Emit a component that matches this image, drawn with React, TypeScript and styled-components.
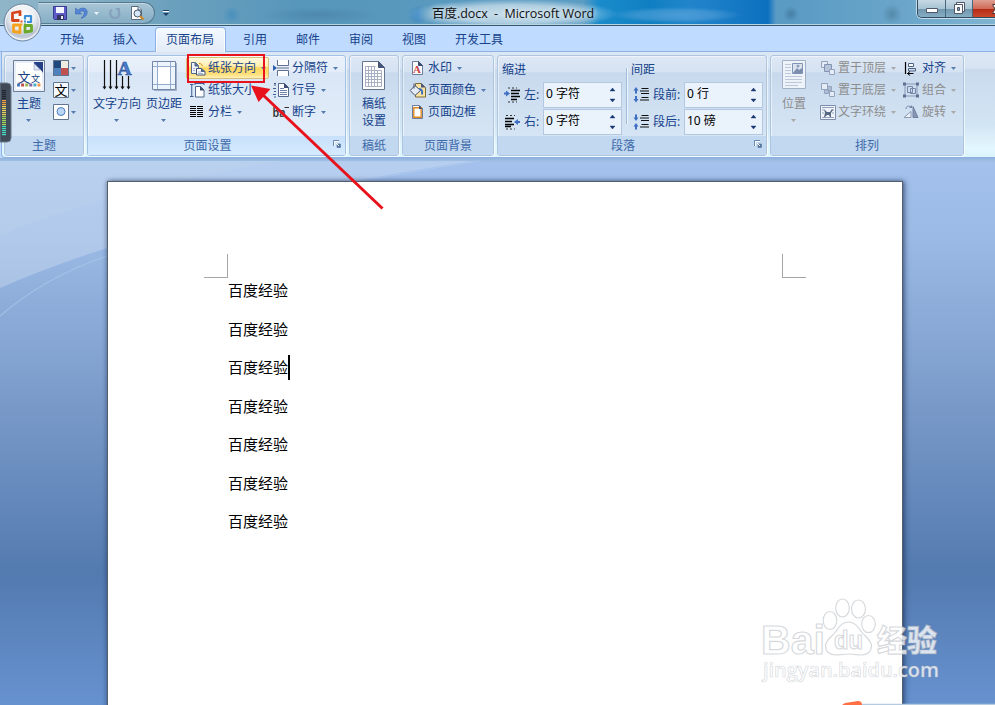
import React from 'react';
import styled, { createGlobalStyle, css } from 'styled-components';

const Global = createGlobalStyle`
  * { box-sizing: border-box; }
  html, body { margin: 0; padding: 0; overflow: hidden; }
  body {
    font-family: "Noto Sans", "Noto Sans CJK SC", sans-serif;
    font-size: 12px;
    color: #15428b;
  }
  svg { overflow: visible; }
`;

const Window = styled.div`
  position: relative;
  width: 995px;
  height: 705px;
  overflow: hidden;
  display: flex;
  flex-direction: column;
  background: #bfdbff;
`;

/* ---------- title bar ---------- */

const TitleBar = styled.header`
  position: relative;
  flex: none;
  display: flex;
  height: 26px;
  border-bottom: 1px solid #37586c;
  box-shadow: inset 0 -1px 0 #b7d6e4;
  overflow: hidden;
  background:
    radial-gradient(ellipse 105px 15px at 513px 14px, rgba(255, 255, 255, 0.68), rgba(255, 255, 255, 0.5) 60%, rgba(255, 255, 255, 0) 100%),
    radial-gradient(ellipse 66px 8px at 676px 15px, rgba(120, 180, 225, 0.5), rgba(120, 180, 225, 0.35) 60%, transparent),
    linear-gradient(90deg, transparent 583px, #1a8ccb 598px, #0f7fc2 650px, #2285cb 690px, #0c70bf 768px, transparent 776px),
    radial-gradient(circle at 232px 15px, rgba(62, 139, 190, 0.7), transparent 9px),
    radial-gradient(circle at 418px 15px, rgba(50, 132, 196, 0.9), transparent 10px),
    radial-gradient(circle at 791px 14px, rgba(50, 100, 135, 0.5), transparent 8px),
    radial-gradient(circle at 892px 14px, rgba(60, 110, 140, 0.5), transparent 10px),
    radial-gradient(ellipse 60px 8px at 320px 15px, rgba(60, 110, 145, 0.35), transparent),
    linear-gradient(90deg, #8fb5c8 0, #84aec3 90px, #6ba0bd 170px, #5796bb 300px, #5b9cc2 560px, #5a9bc4 790px, #6aa5c9 900px, #80b4d2 995px);
`;

const QuickAccess = styled.div`
  display: flex;
  flex: none;
  align-items: center;
  margin: 2px 0 0 38px;
  width: 117px;
  height: 22px;
  padding-left: 14px;
  border: 1px solid #557a92;
  border-left-color: transparent;
  border-radius: 0 11px 11px 0;
  background: linear-gradient(#a8c5d5, #85aec5);
  box-shadow: inset 0 1px 0 rgba(255, 255, 255, 0.35);
`;

const QuickIcon = styled.span<{ $left?: number }>`
  display: flex;
  margin-left: ${p => p.$left ?? 0}px;
`;

const QuickMenu = styled.span`
  display: flex;
  margin: 10px 0 0 8px;
`;

const Title = styled.h1`
  margin: 1px 0 0 263px;
  font: 400 12.500px/26px "Open Sans", "Noto Sans CJK SC", sans-serif;
  color: #101010;
  white-space: pre;
  letter-spacing: -0.04px;
  text-shadow: 0 0 6px #fff;
`;

const WindowButtons = styled.div`
  display: flex;
  margin-left: auto;
  width: 78px;
  height: 18px;
  border: 1px solid #2f4c62;
  border-width: 0 0 1px 1px;
  border-radius: 0 0 0 5px;
  box-shadow: 0 0 0 1px rgba(255, 255, 255, 0.6);
  overflow: hidden;
`;

const WindowButton = styled.span<{ $w: number; $close?: boolean }>`
  display: flex;
  flex: none;
  justify-content: center;
  align-items: center;
  width: ${p => p.$w}px;
  border-right: 1px solid #46677d;
  background: ${p => p.$close
    ? 'linear-gradient(#dfa093, #cf6a58 50%, #b42a13 52%, #c8492c)'
    : 'linear-gradient(#c6d9e4, #a9c4d3 50%, #6f96ac 52%, #86adc2)'};
`;

const Orb = styled.div`
  position: absolute;
  left: 2px;
  top: 2px;
  width: 40px;
  height: 40px;
`;

/* ---------- tabs ---------- */

const Tabs = styled.nav`
  flex: none;
  display: flex;
  height: 26px;
  padding: 1px 0 0 45.500px;
  background: #bfdbff;
  border-bottom: 1px solid #8db2e3;
`;

const Tab = styled.span<{ $active?: boolean }>`
  height: 25px;
  padding: 0 14.500px;
  line-height: 26px;
  white-space: nowrap;
  ${p => p.$active && css`
    margin: 0 3px;
    padding: 0 10.500px;
    height: 26px;
    line-height: 24px;
    border: 1px solid #8db2e3;
    border-bottom: 0;
    border-radius: 4px 4px 0 0;
    background: linear-gradient(#f4f9ff, #e1eaf6);
    box-shadow: inset 0 0 0 1px #f8fcff;
  `}
`;

/* ---------- ribbon ---------- */

const Ribbon = styled.section`
  flex: none;
  display: flex;
  gap: 3px;
  height: 106px;
  margin-left: 1px;
  padding: 3px 0 0 2px;
  border: 1px solid #8db2e3;
  border-width: 0 0 1px 1px;
  border-radius: 0 0 0 4px;
  background: linear-gradient(#dce7f5 0, #d8e4f3 15%, #c9daed 17%, #d2e5f4 70%, #e3f7fe 92%, #dbf3fd 100%);
`;

const GroupBox = styled.div<{ $w: number; $hover?: boolean }>`
  display: flex;
  flex: none;
  flex-direction: column;
  width: ${p => p.$w}px;
  height: 101px;
  border: 1px solid ${p => (p.$hover ? '#a4c2e4' : '#adc5df')};
  border-radius: 3px;
  box-shadow: inset 1px 1px 0 rgba(255, 255, 255, 0.5), 1px 1px 0 rgba(255, 255, 255, 0.6);
  background: ${p => p.$hover
    ? 'linear-gradient(#eaf1fa 0, #e3ecf8 16%, #d9e6f5 17%, #deeaf8 50%, #e3effc 100%)'
    : 'linear-gradient(#dee8f5 0, #d5e2f2 16%, #c8d9ed 17%, #cddef0 40%, #d9e8f6 100%)'};
`;

const GroupBody = styled.div`
  display: flex;
  height: 80px;
  padding-top: 1px;
`;

const GroupFooter = styled.div<{ $hover?: boolean }>`
  display: flex;
  align-items: center;
  height: 19px;
  padding: 0 4px;
  line-height: 19px;
  color: #3e6aaa;
  background: ${p => (p.$hover ? 'linear-gradient(#c8e0fb, #d5ebff)' : '#c1d8f0')};
`;

const GroupName = styled.span<{ $inset: number }>`
  flex: 1;
  padding-right: ${p => p.$inset}px;
  text-align: center;
`;

const Launcher = styled.span`
  display: flex;
  margin-top: -4px;
`;

const BigButton = styled.div<{ $w: number; $left?: number; $off?: boolean }>`
  display: flex;
  flex-direction: column;
  align-items: center;
  flex: none;
  width: ${p => p.$w}px;
  margin-left: ${p => p.$left ?? 0}px;
  padding-top: 3px;
  color: ${p => (p.$off ? '#8d8d8d' : '#15428b')};
`;

const BigIcon = styled.span`
  display: flex;
  align-items: flex-start;
  height: 35px;
`;

const BigLabel = styled.span`
  line-height: 17px;
  white-space: nowrap;
`;

const BigCaret = styled.span`
  display: flex;
  margin: 7px 1px 0 0;
`;

const Column = styled.div<{ $left: number; $w?: number }>`
  flex: none;
  margin-left: ${p => p.$left}px;
  width: ${p => (p.$w ? `${p.$w}px` : 'auto')};
`;

const SmallButton = styled.div<{ $gap?: number; $off?: boolean; $active?: boolean }>`
  display: flex;
  align-items: center;
  height: 22px;
  padding-left: 3px;
  border: 1px solid transparent;
  white-space: nowrap;
  line-height: 20px;
  color: ${p => (p.$off ? '#8d8d8d' : '#15428b')};
  & > svg:first-child { margin-right: ${p => p.$gap ?? 2}px; flex: none; }
  ${p => p.$active && css`
    border-color: #d8bf78;
    border-radius: 2px;
    background: linear-gradient(#fffbe0 0, #ffeeb0 40%, #ffd75c 50%, #ffdf78 80%, #fff0b5 100%);
  `}
`;

const CaretWrap = styled.span<{ $left?: number }>`
  display: flex;
  margin-left: ${p => p.$left ?? 5}px;
`;

const ParaColumn = styled.div<{ $left: number; $w: number }>`
  display: flex;
  flex-direction: column;
  flex: none;
  width: ${p => p.$w}px;
  margin-left: ${p => p.$left}px;
`;

const ParaHeading = styled.div`
  height: 24px;
  line-height: 25px;
`;

const ParaRow = styled.div`
  display: flex;
  align-items: center;
  height: 27px;
  padding-left: 2px;
  line-height: 25px;
`;

const ParaLabel = styled.span<{ $w: number }>`
  width: ${p => p.$w}px;
  margin-left: 3px;
  white-space: nowrap;
`;

const Spin = styled.div`
  display: flex;
  justify-content: space-between;
  align-items: center;
  width: 79px;
  height: 26px;
  padding: 0 6px 0 2px;
  border: 1px solid #b3c7e1;
  background: #eaf2fb;
  color: #000;
`;

const SpinValue = styled.span`
  height: 24px;
  line-height: 22px;
`;

const Divider = styled.div`
  width: 2px;
  height: 56px;
  margin: 11px 0 0 4px;
  background: linear-gradient(90deg, #9fbbdc 50%, #eef5fc 50%);
`;

/* ---------- document ---------- */

const Workspace = styled.main`
  position: relative;
  flex: 1;
  padding: 23px 0 0 107px;
  background: linear-gradient(#8fb1da 0, #9dbce2 2px, #a3c1ec 5px, #9bbae5 80px, #7f9fcd 220px, #547bb0 412px, #557cb2 425px, #6692cf 547px);
`;

const Backdrop = styled.svg`
  position: absolute;
  left: 0;
  top: 0;
`;

const Page = styled.article`
  position: relative;
  width: 796px;
  height: 540px;
  padding: 72px 96px 0;
  border: 1px solid #555f6b;
  background: #fff;
  box-shadow: 2px 0 5px rgba(20, 40, 80, 0.55), -1px 0 4px rgba(20, 40, 80, 0.3);
`;

const Corners = styled.div`
  display: flex;
  justify-content: space-between;
  height: 24px;
`;

const Corner = styled.span<{ $side: 'left' | 'right' }>`
  width: 24px;
  height: 24px;
  border-bottom: 1px solid #a5a5a5;
  ${p => (p.$side === 'left' ? 'border-right: 1px solid #a5a5a5;' : 'border-left: 1px solid #a5a5a5;')}
`;

const Paragraph = styled.p`
  display: flex;
  align-items: center;
  margin: 0 0 0 24px;
  height: 38.500px;
  color: #000;
  font-size: 15px;
  line-height: 26px;
`;

const Lines = styled.div`
  margin-top: -7px;
`;

const TextCursor = styled.i`
  width: 2px;
  height: 25px;
  background: #000;
`;

/* ---------- overlays ---------- */

const Meter = styled.svg`
  position: absolute;
  left: 0;
  top: 83px;
`;

const RedFrame = styled.div`
  position: absolute;
  left: 187px;
  top: 54px;
  width: 78px;
  height: 29px;
  border: 2px solid #e8121c;
`;

const Overlay = styled.svg`
  position: absolute;
  left: 0;
  top: 0;
  pointer-events: none;
`;

/* ---------- icons ---------- */

const Caret = ({ off }: { off?: boolean }) => (
  <svg width="5" height="3" viewBox="0 0 5 3"><path d="M0 0h5L2.5 3z" fill={off ? '#a9a9a9' : '#567db1'} /></svg>
);

const SpinArrows = () => (
  <svg width="5" height="15" viewBox="0 0 5 15"><path d="M0 4h5L2.5 1zM0 12h5L2.5 15z" fill="#15366f" stroke="#15366f" strokeWidth=".4" /></svg>
);

const LauncherIcon = () => (
  <svg width="8" height="8" viewBox="0 0 8 8">
    <path d="M.5 6V.5H6" fill="none" stroke="#6688b5" />
    <path d="M1.500 6V1.500H6" fill="none" stroke="#fff" />
    <path d="M4 4h3.500v3.500H4z" fill="#54739f" stroke="#54739f" strokeWidth=".6" />
    <path d="M3 3l3 3" stroke="#fff" />
  </svg>
);

const S16 = ({ children }: { children: React.ReactNode }) => (
  <svg width="16" height="16" viewBox="0 0 16 16" fill="none">{children}</svg>
);

const SheetShape = ({ x = 2, y = 1, w = 11, h = 14 }) => (
  <>
    <path d={`M${x + 0.5} ${y + 0.5}h${w - 5}l4 4v${h - 5}h-${w - 1}z`} fill="#fbfcff" stroke="#6c7c99" />
    <path d={`M${x + w - 4.5} ${y + 0.5}v4h4z`} fill="#3d4c70" stroke="#3d4c70" />
  </>
);

const OfficeOrb = () => (
  <svg width="40" height="40" viewBox="0 0 40 40">
    <defs>
      <radialGradient id="orb" cx="50%" cy="35%" r="65%">
        <stop offset="0" stopColor="#fff" /><stop offset=".5" stopColor="#eceff3" />
        <stop offset=".8" stopColor="#b9c3d2" /><stop offset="1" stopColor="#e8eef6" />
      </radialGradient>
    </defs>
    <circle cx="20.500" cy="20.500" r="18.500" fill="url(#orb)" stroke="#6e87a3" />
    <circle cx="20.500" cy="20.500" r="17" fill="none" stroke="#fff" opacity=".7" />
    <g fill="none" strokeWidth="2.800" strokeLinejoin="round">
      <path d="M17.500 18.500h-7v-7.500l7.500-1.500v4.500" stroke="#d6461d" />
      <path d="M23 17.500v-3.500h6v6h-4" stroke="#3b8fd6" strokeWidth="2.200" />
      <path d="M18 23v7.500l-6.500-1v-6.500z" stroke="#f4a21c" />
      <path d="M23 23.500h6.500v5.500l-6.500 1z" stroke="#6aa92c" />
    </g>
    <path d="M18.500 18.500h2v2h-2z" fill="#e8542a" /><path d="M22 18.500h2v2h-2z" fill="#3b8fd6" />
    <path d="M18.500 21.500h2v2h-2z" fill="#f4a21c" /><path d="M22 21.500h2v2h-2z" fill="#6aa92c" />
  </svg>
);

const SaveIcon = () => (
  <svg width="15" height="15" viewBox="0 0 15 15">
    <path d="M.5.5h13v13h-12l-1-1z" fill="#5c5bc8" stroke="#3a3a94" />
    <path d="M3 1h8v6H3z" fill="#f2f5ff" /><path d="M4 9h7v5H4z" fill="#34345c" />
    <path d="M8 10h2v3H8z" fill="#e9ecff" />
  </svg>
);

const UndoIcon = () => (
  <svg width="13" height="14" viewBox="0 0 13 14">
    <path d="M.500 2v6h6L4.500 6C8 4 10 5.200 9 8c-.5 1.800-1.500 3-3 4.300 4-.8 6.200-3.200 6.200-6C12.200 1.900 7 .6 3 4.200z" fill="#5585d6" stroke="#3a66b4" strokeWidth=".6" />
  </svg>
);

const RedoIcon = () => (
  <svg width="12" height="13" viewBox="0 0 12 13">
    <path d="M3 2.500C0 5 .6 10.500 5.500 11c4.500.3 6.200-4.500 3.500-7.500" fill="none" stroke="#86a2bd" strokeWidth="2.200" />
    <path d="M6 1h5v5z" fill="#86a2bd" />
  </svg>
);

const PreviewIcon = () => (
  <svg width="15" height="16" viewBox="0 0 15 16">
    <path d="M1.500 1.500h6.500l3.500 3.500v9.500h-10z" fill="#fff" stroke="#58687f" />
    <path d="M8 1.500V5h3.500" fill="#dbe3ef" stroke="#58687f" />
    <circle cx="7.500" cy="8.500" r="3.500" fill="#d5e6fa" stroke="#46556b" />
    <path d="M10 11l3.500 3.500" stroke="#c98a2c" strokeWidth="2.400" />
  </svg>
);

const ThemeIcon = () => (
  <svg width="32" height="32" viewBox="0 0 32 32">
    <path d="M.5.500h31v31H.500z" fill="#e9eff8" stroke="#6e7d99" />
    <path d="M3 3h20l6 6.500V29H3z" fill="#fff" />
    <path d="M21 2h9v11c-1-2-2-3-3-3.500l-6-6z" fill="#253f84" /><path d="M21 3.500l6.500 6.500H21z" fill="#dfe7f5" stroke="#8a9bc0" strokeWidth=".6" />
    <text x="4.500" y="21.500" fontSize="13" fill="#17427e">文</text>
    <text x="18" y="21.500" fontSize="9" fill="#17427e">文</text>
    {['#4a76bd', '#c0504d', '#9bbb59', '#8064a2', '#4bacc6', '#f79646'].map((c, i) => (
      <rect key={i} x={4 + i * 4.100} y="23.500" width="3" height="3" fill={c} />
    ))}
  </svg>
);

const ColorsIcon = () => (
  <S16>
    <path d="M0 0h16v16H0z" fill="#62758f" />
    <path d="M1 1h7v7H1z" fill="#1f497d" /><path d="M8 1h7v7H8z" fill="#eeece1" />
    <path d="M1 8h7v7H1z" fill="#4f81bd" /><path d="M8 8h7v7H8z" fill="#c0504d" />
  </S16>
);

const FontsIcon = () => (
  <S16>
    <path d="M.5.5h15v15H.500z" fill="#f5f8fc" stroke="#62758f" />
    <text x="1.500" y="13" fontSize="13" fill="#000">文</text>
  </S16>
);

const EffectsIcon = () => (
  <S16>
    <path d="M.5.5h15v15H.500z" fill="#fff" stroke="#62758f" />
    <circle cx="8" cy="7.500" r="4" fill="#b9d6f6" stroke="#4f7fc0" />
  </S16>
);

const TextDirectionIcon = () => (
  <svg width="30" height="32" viewBox="0 0 30 32">
    <path d="M2.500 0v27M8.500 0v27M14.500 0v27M20.500 16v11M26.500 16v11" stroke="#111" strokeWidth="1.200" />
    <path d="M.5 26.500h4l-2 3zM6.500 26.500h4l-2 3zM12.500 26.500h4l-2 3zM18.500 26.500h4l-2 3zM24.500 26.500h4l-2 3z" fill="#111" />
    <text x="15.500" y="14.500" fontSize="19.500" fontWeight="700" fontFamily="Liberation Serif, serif" fill="#4a7bca" stroke="#284f96" strokeWidth=".6">A</text>
  </svg>
);

const MarginsIcon = () => (
  <svg width="25" height="32" viewBox="0 0 25 32">
    <path d="M.5 1.500h23v28H.5z" fill="#eef4fc" stroke="#7187a8" />
    <path d="M5.500 2v27M18.500 2v27M1 6.500h22M1 24.500h22" stroke="#94acd0" />
    <path d="M6 7h12v17H6z" fill="#fff" /><path d="M24.500 3v27.500H2" fill="none" stroke="#9fb0c8" />
  </svg>
);

const OrientationIcon = () => (
  <S16>
    <path d="M1.500 2.500h4l3 3v8h-7z" fill="#eff4fc" stroke="#53698c" />
    <path d="M5 2.500v3.500h3.500" fill="#53698c" stroke="#53698c" />
    <path d="M6.500 8.500h5l3.500 3v3.500h-8.500z" fill="#fff" stroke="#3f5579" />
    <path d="M11 8v4h4.500z" fill="#53698c" />
    <path d="M8 12h3M8 13.500h5M3 8.500h2M3 10.500h2" stroke="#8ea2c4" strokeWidth=".8" />
    <path d="M9 3.500c2 0 3 1 3.500 2.500" stroke="#d78f1c" />
  </S16>
);

const SizeIcon = () => (
  <S16>
    <path d="M0 2.500h3.500M0 14.500h3.500M1.750 3v11" stroke="#3c5c96" />
    <path d="M5.500 4.500h5l3.500 3.500v7h-8.500z" fill="#fff" stroke="#53698c" />
    <path d="M10 4v4.500h4.500z" fill="#3d4c70" /><path d="M5 1.500h9M5 0v3M14 0v3" stroke="#3c5c96" />
  </S16>
);

const ColumnsIcon = () => (
  <S16>
    <path d="M0 2.500h6M0 4.500h6M0 6.500h6M0 8.500h6M0 10.500h6M0 12.500h6M7 2.500h6M7 4.500h6M7 6.500h6M7 8.500h6M7 10.500h6M7 12.500h6" stroke="#000" strokeWidth="1.200" />
  </S16>
);

const BreaksIcon = () => (
  <S16>
    <path d="M5 0h10v5.500H5z" fill="#fff" /><path d="M5 10h10v6H5z" fill="#fff" />
    <path d="M4.500 0v5.500h11V0M4.500 16v-5.500h11V16" stroke="#60718e" />
    <path d="M4 8h12" stroke="#60718e" /><path d="M0 5l4 3-4 3z" fill="#2c5cab" />
  </S16>
);

const LineNumbersIcon = () => (
  <S16>
    <path d="M1 1.500h2M2 1v3M0 6.500h3M1 9.500h2M0 12.500h3M1 15h2" stroke="#3c5c96" />
    <path d="M5.500 1.500h6l4 4v9h-10z" fill="#fff" stroke="#53698c" /><path d="M11 1v5h5z" fill="#3d4c70" />
    <path d="M7 8.500h7M7 10.500h7M7 12.500h7M7 6.500h4" stroke="#6c82ab" />
  </S16>
);

const HyphenIcon = () => (
  <S16>
    <text x="-0.500" y="13" fontSize="12" fontWeight="600" fill="#333" textLength="13" lengthAdjust="spacingAndGlyphs">ba</text>
    <path d="M11.500 3.500h4.500" stroke="#333" />
  </S16>
);

const GridPaperIcon = () => (
  <svg width="24" height="32" viewBox="0 0 24 32">
    <path d="M.5 1.500h16l6 6v22H.500z" fill="#fff" stroke="#66758e" />
    <path d="M16.500 1.500v6h6z" fill="#46567a" stroke="#46567a" />
    <path d="M3.500 10.500h16v16h-16zM3.500 13.500h16M3.500 16.500h16M3.500 19.500h16M3.500 22.500h16M6.500 6v20M9.500 6v20M12.500 6v20M15.500 10v16M3.500 6v5M3.500 6.500h10" fill="none" stroke="#a6b0c2" />
  </svg>
);

const WatermarkIcon = () => (
  <S16>
    <SheetShape />
    <text x="3" y="13" fontSize="11" fontFamily="Liberation Serif, serif" fontWeight="700" fill="#c8433f">A</text>
  </S16>
);

const PageColorIcon = () => (
  <S16>
    <path d="M5.500 1.500h6l4 4v9.500h-10z" fill="#fbe3a0" stroke="#7d6a3c" /><path d="M11 1v4.500h4.500z" fill="#4d5a80" />
    <path d="M5 3.500L.2 8.500 5 13.500l5.500-5z" fill="#e4ebf5" stroke="#46536c" /><path d="M4 1.500v5" stroke="#46536c" /><path d="M9 7c3 0 3.500 2 3 5.500" stroke="#3c6fc2" strokeWidth="2" />
  </S16>
);

const PageBorderIcon = () => (
  <S16>
    <path d="M2.500 1.500h7l3 3v10h-10z" fill="#fff" stroke="#6c7c99" />
    <path d="M3.800 3.800h7.400v9.400H3.800z" fill="#fff" stroke="#e08a25" strokeWidth="1.400" />
    <path d="M9 1.500v3.500h3.500z" fill="#3d4c70" />
  </S16>
);

const IndentIcon = ({ right }: { right?: boolean }) => (
  <svg width="17" height="16" viewBox="0 0 17 16" fill="none">
    <path d={right ? 'M1 4.500h9M1 7.500h7M1 10.500h9M1 12.500h6' : 'M7 3.500h9M7 6.500h8M7 9.500h9M7 12.500h6'} stroke="#000" strokeWidth="1.500" />
    <path d={right ? 'M2 1.500h9M2 15h9' : 'M4 1h9M4 15h9'} stroke="#333" strokeDasharray="2 2" />
    {right
      ? <path d="M16 7h-2V5l-4 3 4 3V9h2z" fill="#3f6fc4" />
      : <path d="M0 5.500h2v-2l4 3-4 3v-2H0z" fill="#3f6fc4" />}
  </svg>
);

const SpacingIcon = ({ after }: { after?: boolean }) => (
  <svg width="17" height="18" viewBox="0 0 17 18" fill="none">
    <path d={after
      ? 'M2 1.500h2v3h1.500L3 8 .500 4.500H2zM2 16.500h2v-3h1.500L3 10 .500 13.500H2z'
      : 'M2 7.500h2v-3h1.500L3 1 .500 4.500H2zM2 10h2v3h1.500L3 16.500.500 13H2z'} fill="#3f6fc4" />
    <path d="M8.500 2.500h7M7 5h9M8 7.500h8M8.500 11.500h7M7 14h9" stroke="#111" strokeWidth="1.100" />
  </svg>
);

const PositionIcon = () => (
  <svg width="25" height="32" viewBox="0 0 25 32">
    <path d="M.5.500h23v28H.5z" fill="#eef3fa" stroke="#a3b1c8" />
    <path d="M3 4.500h6M3 7.500h6M3 10.500h6M3 13.500h6M3 16.500h17M3 19.500h17M3 22.500h17M3 25.500h13" stroke="#bcc8da" />
    <path d="M10.500 3.500h10v10h-10z" fill="#dbe3ef" stroke="#8093b3" />
    <path d="M11 13l4-5 2 2 3-2v5z" fill="#7b8dac" /><circle cx="16" cy="6" r="1.500" fill="#8da0c0" />
  </svg>
);

const FrontIcon = ({ back }: { back?: boolean }) => (
  <S16>
    <path d="M1.500 1.500h6v6h-6z" fill="#e6ecf5" stroke="#93a2bd" />
    {back
      ? <path d="M7.500 4.500h4v4h-4zM4.500 7.500h4v4h-4z" fill="#aebcd4" stroke="#93a2bd" />
      : <path d="M4.500 4.500h7v7h-7z" fill="#b7c4da" stroke="#8394b2" />}
    <path d="M9.500 9.500h5v5h-5z" fill="#e6ecf5" stroke="#93a2bd" />
  </S16>
);

const WrapIcon = () => (
  <S16>
    <path d="M.5 1.500h15v14H.500z" fill="#f0f4fa" stroke="#7d8dab" />
    <path d="M2 3.500h12M2 6h2M12 6h2M2 9h2M12 9h2M2 13.500h12" stroke="#94a3bd" />
    <path d="M4 5l3 3h3l2-3 1 1-2 3v4h-1l-1-2H7l-2 2H4l1-4z" fill="#566883" />
  </S16>
);

const AlignIcon = () => (
  <S16>
    <path d="M2.500 2v12" stroke="#000" strokeWidth="1.200" /><path d="M5.500 3.500h5v3h-5z" fill="#fff" stroke="#4f6180" />
    <path d="M5.500 8.500h7v2.500h-7z" fill="#cfdcf0" stroke="#4f6180" /><path d="M4.500 13.500h6M7 11.500l-2.500 2 2.500 2" stroke="#000" />
  </S16>
);

const GroupIcon = () => (
  <S16>
    <path d="M2 2h12v12H2z" stroke="#8797b3" /><path d="M4.500 4.500h5v6h-5zM7.500 6.500h5v5h-5z" stroke="#7386a6" />
    <path d="M0 0.500h3v3H0zM13 0.500h3v3h-3zM0 12.500h3v3H0zM13 12.500h3v3h-3z" fill="#5f7192" />
  </S16>
);

const RotateIcon = () => (
  <S16>
    <path d="M1 13.500L8 7.500v6z" fill="#eef2f8" stroke="#8d9cb6" /><path d="M10 13.500V2.500l5 11z" fill="#8797b3" stroke="#6f809f" />
    <path d="M3 5c0-3 3-3.500 5-2" stroke="#7386a6" /><path d="M6 4h3V1z" fill="#7386a6" />
  </S16>
);

/* ---------- data ---------- */

type SmallItem = { icon: React.ReactNode; label: string; caret?: boolean; off?: boolean; active?: boolean };

const TABS = ['开始', '插入', '页面布局', '引用', '邮件', '审阅', '视图', '开发工具'];

const setupA: SmallItem[] = [
  { icon: <OrientationIcon />, label: '纸张方向', caret: true, active: true },
  { icon: <SizeIcon />, label: '纸张大小' },
  { icon: <ColumnsIcon />, label: '分栏', caret: true },
];
const setupB: SmallItem[] = [
  { icon: <BreaksIcon />, label: '分隔符', caret: true },
  { icon: <LineNumbersIcon />, label: '行号', caret: true },
  { icon: <HyphenIcon />, label: '断字', caret: true },
];
const background: SmallItem[] = [
  { icon: <WatermarkIcon />, label: '水印', caret: true },
  { icon: <PageColorIcon />, label: '页面颜色', caret: true },
  { icon: <PageBorderIcon />, label: '页面边框' },
];
const arrangeA: SmallItem[] = [
  { icon: <FrontIcon />, label: '置于顶层', caret: true, off: true },
  { icon: <FrontIcon back />, label: '置于底层', caret: true, off: true },
  { icon: <WrapIcon />, label: '文字环绕', caret: true, off: true },
];
const arrangeB: SmallItem[] = [
  { icon: <AlignIcon />, label: '对齐', caret: true },
  { icon: <GroupIcon />, label: '组合', caret: true, off: true },
  { icon: <RotateIcon />, label: '旋转', caret: true, off: true },
];

const SmallColumn = ({ items, left, w, gap }: { items: SmallItem[]; left: number; w: number; gap?: number }) => (
  <Column $left={left} $w={w}>
    {items.map(i => (
      <SmallButton key={i.label} $gap={gap} $off={i.off} $active={i.active}>
        {i.icon}{i.label}
        {i.caret && <CaretWrap><Caret off={i.off} /></CaretWrap>}
      </SmallButton>
    ))}
  </Column>
);

type GroupProps = { name: string; w: number; hover?: boolean; launcher?: boolean; children: React.ReactNode };

const Group = ({ name, w, hover, launcher, children }: GroupProps) => (
  <GroupBox $w={w} $hover={hover}>
    <GroupBody>{children}</GroupBody>
    <GroupFooter $hover={hover}>
      <GroupName $inset={launcher ? 10 : 0}>{name}</GroupName>
      {launcher && <Launcher><LauncherIcon /></Launcher>}
    </GroupFooter>
  </GroupBox>
);

const SpinRow = ({ icon, label, value, labelWidth }: { icon: React.ReactNode; label: string; value: string; labelWidth: number }) => (
  <ParaRow>
    {icon}
    <ParaLabel $w={labelWidth}>{label}</ParaLabel>
    <Spin><SpinValue>{value}</SpinValue><SpinArrows /></Spin>
  </ParaRow>
);

const meterColor = (i: number) =>
  i < 5 ? '#20262e' : i < 8 ? '#f0a040' : i < 13 ? '#e6d45c' : i < 18 ? '#a5d860' : '#45dcc0';

export default function App() {
  return (
    <Window>
      <Global />
      <TitleBar>
        <QuickAccess>
          <QuickIcon><SaveIcon /></QuickIcon>
          <QuickIcon $left={7}><UndoIcon /></QuickIcon>
          <QuickIcon $left={6}>
            <svg width="5" height="3" viewBox="0 0 5 3"><path d="M0 0h5L2.500 3z" fill="#eaf3fa" /></svg>
          </QuickIcon>
          <QuickIcon $left={10}><RedoIcon /></QuickIcon>
          <QuickIcon $left={9}><PreviewIcon /></QuickIcon>
        </QuickAccess>
        <QuickMenu>
          <svg width="6" height="7" viewBox="0 0 6 7"><path d="M0 .5h6" stroke="#1f3f66" /><path d="M0 1.500h6" stroke="#fff" /><path d="M0 3h6L3 6z" fill="#1f3f66" /></svg>
        </QuickMenu>
        <Title>百度.docx  -  Microsoft Word</Title>
        <WindowButtons>
          <WindowButton $w={28}>
            <svg width="12" height="10" viewBox="0 0 12 10"><path d="M.5 4.500h11v4H.500z" fill="#fff" stroke="#4d5768" /></svg>
          </WindowButton>
          <WindowButton $w={27}>
            <svg width="12" height="12" viewBox="0 0 12 12"><path d="M3.500-.5h8v9h-8z" fill="#fff" stroke="#4d5768" /><path d="M1.500 1.500h8v9h-8z" fill="#fff" stroke="#4d5768" /><path d="M4.500 4.500h2v3h-2z" fill="#7fa1b8" stroke="#4d5768" /></svg>
          </WindowButton>
          <WindowButton $w={48} $close>
            <svg width="12" height="10" viewBox="0 0 12 10"><path d="M1.500.500h3l1.500 2 1.500-2h3L8 5l2.500 4.500h-3l-1.500-2-1.500 2h-3L4 5z" fill="#fff" stroke="#4d3638" /></svg>
          </WindowButton>
        </WindowButtons>
      </TitleBar>

      <Tabs>
        {TABS.map(t => <Tab key={t} $active={t === '页面布局'}>{t}</Tab>)}
      </Tabs>

      <Ribbon>
        <Group name="主题" w={80}>
          <BigButton $w={32} $left={8}>
            <BigIcon><ThemeIcon /></BigIcon>
            <BigLabel>主题</BigLabel>
            <BigCaret><Caret /></BigCaret>
          </BigButton>
          <Column $left={4}>
            {[<ColorsIcon key="c" />, <FontsIcon key="f" />, <EffectsIcon key="e" />].map((icon, i) => (
              <SmallButton key={i} $gap={2}>{icon}<CaretWrap $left={0}><Caret /></CaretWrap></SmallButton>
            ))}
          </Column>
        </Group>

        <Group name="页面设置" w={259} hover launcher>
          <BigButton $w={50} $left={4}>
            <BigIcon><TextDirectionIcon /></BigIcon>
            <BigLabel>文字方向</BigLabel>
            <BigCaret><Caret /></BigCaret>
          </BigButton>
          <BigButton $w={40} $left={2}>
            <BigIcon><MarginsIcon /></BigIcon>
            <BigLabel>页边距</BigLabel>
            <BigCaret><Caret /></BigCaret>
          </BigButton>
          <SmallColumn items={setupA} left={2} w={83} />
          <SmallColumn items={setupB} left={0} w={74} gap={3} />
        </Group>

        <Group name="稿纸" w={50}>
          <BigButton $w={48}>
            <BigIcon><GridPaperIcon /></BigIcon>
            <BigLabel>稿纸</BigLabel>
            <BigLabel>设置</BigLabel>
          </BigButton>
        </Group>

        <Group name="页面背景" w={92}>
          <SmallColumn items={background} left={3} w={84} />
        </Group>

        <Group name="段落" w={270} launcher>
          <ParaColumn $left={4} $w={120}>
            <ParaHeading>缩进</ParaHeading>
            <SpinRow icon={<IndentIcon />} label="左:" value="0 字符" labelWidth={19} />
            <SpinRow icon={<IndentIcon right />} label="右:" value="0 字符" labelWidth={19} />
          </ParaColumn>
          <Divider />
          <ParaColumn $left={3} $w={132}>
            <ParaHeading>间距</ParaHeading>
            <SpinRow icon={<SpacingIcon />} label="段前:" value="0 行" labelWidth={31} />
            <SpinRow icon={<SpacingIcon after />} label="段后:" value="10 磅" labelWidth={31} />
          </ParaColumn>
        </Group>

        <Group name="排列" w={194}>
          <BigButton $w={36} $left={5} $off>
            <BigIcon><PositionIcon /></BigIcon>
            <BigLabel>位置</BigLabel>
            <BigCaret><Caret off /></BigCaret>
          </BigButton>
          <SmallColumn items={arrangeA} left={4} w={83} />
          <SmallColumn items={arrangeB} left={0} w={60} gap={3} />
        </Group>
      </Ribbon>

      <Workspace>
        <Backdrop width="995" height="547" viewBox="0 158 995 547">
          <defs>
            <linearGradient id="sweep" x1="0" y1="0" x2="0" y2="1">
              <stop offset="0" stopColor="#dfeaf6" stopOpacity=".32" />
              <stop offset="1" stopColor="#dfeaf6" stopOpacity=".32" />
            </linearGradient>
          </defs>
          <path d="M0 161H475Q300 185 107 248Q45 268 0 288z" fill="url(#sweep)" />
          <path d="M0 161H280Q110 190 0 235z" fill="#c5e0ea" opacity=".18" />
          <path d="M0 316Q45 277 107 256Q250 195 480 161" fill="none" stroke="#b9d1ef" strokeWidth="1.200" opacity=".5" />
        </Backdrop>
        <Page>
          <Corners><Corner $side="left" /><Corner $side="right" /></Corners>
          <Lines>
            {Array.from({ length: 7 }, (_, i) => (
              <Paragraph key={i}>百度经验{i === 2 && <TextCursor />}</Paragraph>
            ))}
          </Lines>
        </Page>
      </Workspace>

      <Orb><OfficeOrb /></Orb>

      <Meter width="12" height="59" viewBox="0 0 12 59">
        <path d="M0 0h7q4 0 4 4v51q0 4-4 4H0z" fill="#414a58" stroke="#6d7a8c" />
        {Array.from({ length: 23 }, (_, i) => (
          <rect key={i} x="2" y={7 + i * 2} width="4" height="1.200" fill={meterColor(i)} />
        ))}
      </Meter>

      <RedFrame />

      <Overlay width="995" height="705" viewBox="0 0 995 705">
        <path d="M262 94L382.500 208.500" stroke="#e8121c" strokeWidth="3" />
        <path d="M251 85.500L270.500 89L258.500 102z" fill="#e8121c" />

        <g fill="#fff" fillOpacity=".78" stroke="#b4b9c0" strokeOpacity=".55" strokeWidth="1.200">
          <ellipse cx="830" cy="620.500" rx="6.800" ry="9" />
          <ellipse cx="842.500" cy="608" rx="6.800" ry="9" />
          <ellipse cx="858.500" cy="609" rx="7" ry="9" />
          <ellipse cx="868.500" cy="624" rx="6.800" ry="8.500" />
          <path d="M848.500 622c7 0 10 6 13 10c4 5 10 8 10 14c0 6-5 9-10 9c-5 0-8-1-13-1s-8 1-13 1c-5 0-10-3-10-9c0-6 6-9 10-14c3-4 6-10 13-10z" />
          <text x="761" y="653.500" fontSize="40" fontWeight="700" fontFamily="Liberation Sans, sans-serif" textLength="64" lengthAdjust="spacingAndGlyphs">Bai</text>
          <text x="834" y="649" fontSize="26" fontWeight="700" fontFamily="Liberation Sans, sans-serif" textLength="29" lengthAdjust="spacingAndGlyphs">du</text>
          <text x="877" y="651" fontSize="30" fontWeight="900" fontFamily="Noto Sans CJK SC, sans-serif">经验</text>
          <text x="763" y="677" fontSize="20" fontWeight="600" fontFamily="Open Sans, sans-serif" strokeWidth=".7" textLength="176" lengthAdjust="spacingAndGlyphs">jingyan.baidu.com</text>
        </g>

        <path d="M862 704.500H995" stroke="#b5cbe0" strokeWidth="1.500" />
        <path d="M842 705l3-2 13-2q4 0 4 4z" fill="#ff7144" />
      </Overlay>
    </Window>
  );
}
